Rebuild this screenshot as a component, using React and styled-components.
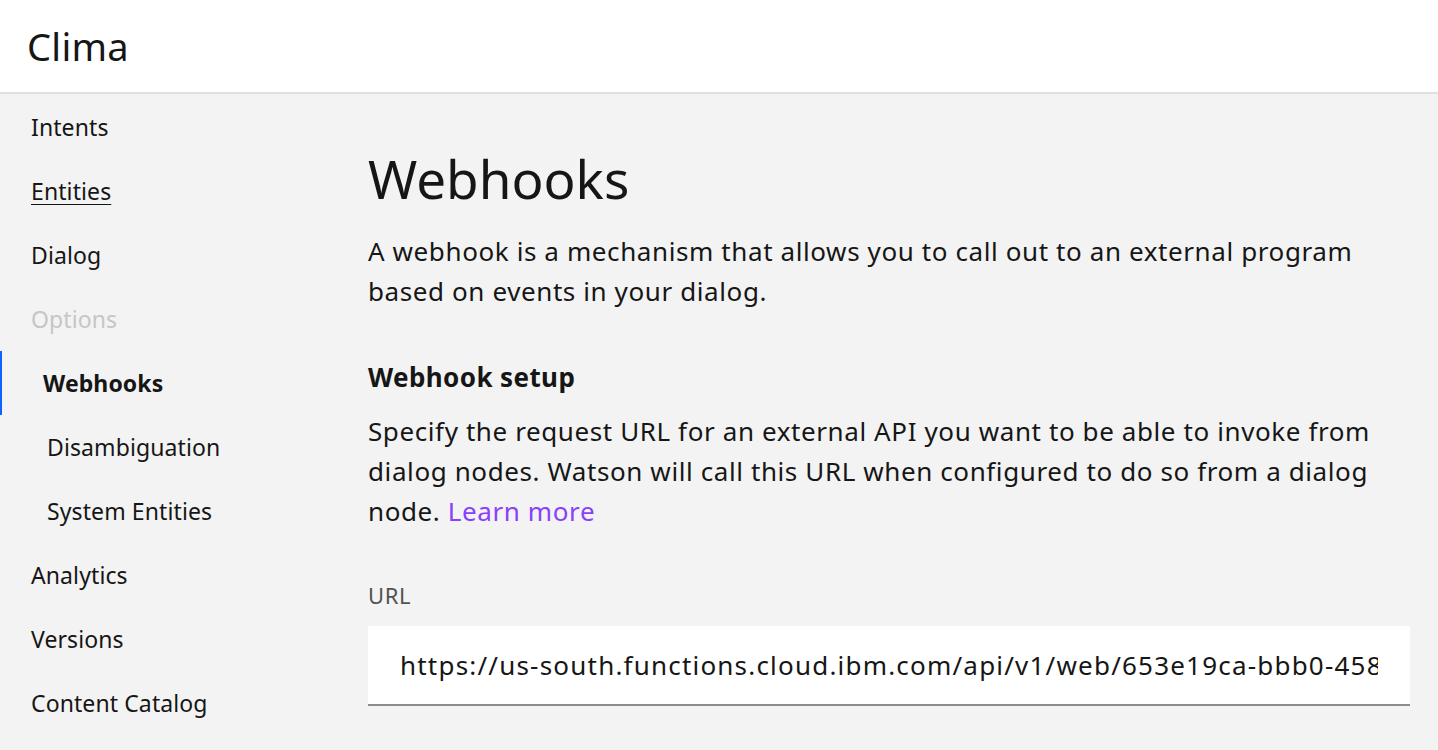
import React from 'react'
import styled, { createGlobalStyle } from 'styled-components'

const GlobalStyle = createGlobalStyle`
    html, body {
        margin: 0;
        padding: 0;
        background: #f3f3f3;
        font-family: "Noto Sans", "Open Sans", sans-serif;
        color: #161616;
    }
`

const Page = styled.div`
    min-height: 750px;
    display: flex;
    flex-direction: column;
`

const Header = styled.header`
    height: 92px;
    background: #ffffff;
    border-bottom: 2px solid #e0e0e0;
    display: flex;
    align-items: center;
    padding-left: 27px;
    font-size: 38px;
    font-weight: 400;
    letter-spacing: 0.3px;
`

const Body = styled.div`
    display: grid;
    grid-template-columns: 320px minmax(0, 1fr);
    padding-top: 1px;
`

const Nav = styled.nav`
    display: flex;
    flex-direction: column;
`

const NavItem = styled.div`
    height: 64px;
    display: flex;
    align-items: center;
    font-size: 23px;
    letter-spacing: 0.1px;
    padding-left: ${p => p.$indent ? (p.$active ? 41 : 45) : 29}px;
    font-weight: ${p => p.$active ? 700 : 400};
    color: ${p => p.$muted ? '#c6c6c6' : '#161616'};
    text-decoration: ${p => p.$underline ? 'underline' : 'none'};
    text-decoration-thickness: 1px;
    text-underline-offset: 4px;
    border-left: 2px solid ${p => p.$active ? '#0f62fe' : 'transparent'};
`

const Main = styled.main`
    padding: 44px 28px 0 48px;
`

const Title = styled.h1`
    margin: 0 0 12px;
    font-size: 53px;
    font-weight: 400;
    line-height: 80px;
`

const Text = styled.p`
    margin: 0;
    font-size: 26px;
    letter-spacing: 0.6px;
    line-height: 40px;
    max-width: 1015px;
`

const Subtitle = styled.h2`
    margin: 46px 0 14px;
    font-size: 26px;
    letter-spacing: 0.4px;
    font-weight: 700;
    line-height: 40px;
`

const Link = styled.a`
    color: #8a3ffc;
    text-decoration: none;
`

const Label = styled.label`
    display: block;
    margin: 49px 0 16px;
    font-size: 22px;
    line-height: 30px;
    letter-spacing: 0.6px;
    color: #525252;
`

const Input = styled.div`
    height: 78px;
    background: #ffffff;
    border-bottom: 2px solid #8d8d8d;
    display: flex;
    align-items: center;
    padding: 0 32px;
`

const InputText = styled.span`
    flex: 1;
    min-width: 0;
    font-size: 26px;
    letter-spacing: 1.2px;
    white-space: nowrap;
    overflow: hidden;
`

export default function App() {
    return (
        <Page>
            <GlobalStyle />
            <Header>Clima</Header>
            <Body>
                <Nav>
                    <NavItem>Intents</NavItem>
                    <NavItem $underline>Entities</NavItem>
                    <NavItem>Dialog</NavItem>
                    <NavItem $muted>Options</NavItem>
                    <NavItem $indent $active>Webhooks</NavItem>
                    <NavItem $indent>Disambiguation</NavItem>
                    <NavItem $indent>System Entities</NavItem>
                    <NavItem>Analytics</NavItem>
                    <NavItem>Versions</NavItem>
                    <NavItem>Content Catalog</NavItem>
                </Nav>
                <Main>
                    <Title>Webhooks</Title>
                    <Text>A webhook is a mechanism that allows you to call out to an external program based on events in your dialog.</Text>
                    <Subtitle>Webhook setup</Subtitle>
                    <Text>
                        Specify the request URL for an external API you want to be able to invoke from dialog nodes. Watson will call this URL when configured to do so from a dialog node. <Link href="#">Learn more</Link>
                    </Text>
                    <Label>URL</Label>
                    <Input>
                        <InputText>https://us-south.functions.cloud.ibm.com/api/v1/web/653e19ca-bbb0-4584-a3c1-7f2e0c9b1d22/default/weather.json</InputText>
                    </Input>
                </Main>
            </Body>
        </Page>
    )
}
